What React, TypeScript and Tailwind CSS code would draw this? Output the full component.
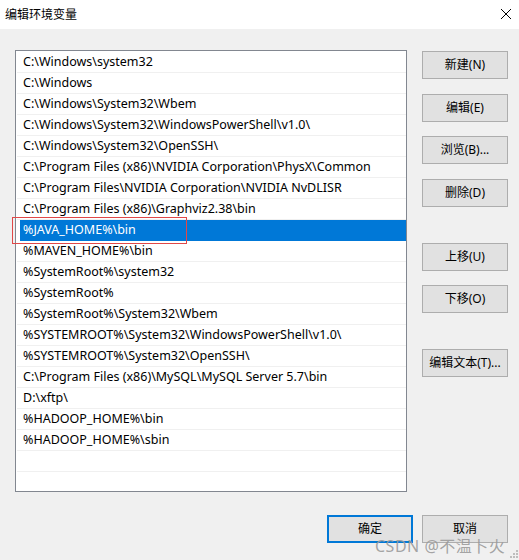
import React from 'react';

const paths = [
  'C:\\Windows\\system32',
  'C:\\Windows',
  'C:\\Windows\\System32\\Wbem',
  'C:\\Windows\\System32\\WindowsPowerShell\\v1.0\\',
  'C:\\Windows\\System32\\OpenSSH\\',
  'C:\\Program Files (x86)\\NVIDIA Corporation\\PhysX\\Common',
  'C:\\Program Files\\NVIDIA Corporation\\NVIDIA NvDLISR',
  'C:\\Program Files (x86)\\Graphviz2.38\\bin',
  '%JAVA_HOME%\\bin',
  '%MAVEN_HOME%\\bin',
  '%SystemRoot%\\system32',
  '%SystemRoot%',
  '%SystemRoot%\\System32\\Wbem',
  '%SYSTEMROOT%\\System32\\WindowsPowerShell\\v1.0\\',
  '%SYSTEMROOT%\\System32\\OpenSSH\\',
  'C:\\Program Files (x86)\\MySQL\\MySQL Server 5.7\\bin',
  'D:\\xftp\\',
  '%HADOOP_HOME%\\bin',
  '%HADOOP_HOME%\\sbin',
  '',
  '',
];

const SELECTED = 8;

const Btn: React.FC<{ label: string; className?: string; primary?: boolean }> = ({ label, className = '', primary }) => (
  <div
    className={`w-[86px] h-[28px] flex items-center justify-center bg-[#e1e1e1] text-[12px] text-black ${
      primary ? 'border-2 border-[#0078d7]' : 'border border-[#adadad]'
    } ${className}`}
  >
    {label}
  </div>
);

export default function App() {
  return (
    <div
      className="w-[519px] h-[560px] bg-[#f0f0f0] flex flex-col relative overflow-hidden"
      style={{ fontFamily: '"Noto Sans", "Noto Sans CJK SC", sans-serif' }}
    >
      {/* title bar */}
      <div className="h-[29px] bg-white flex items-center justify-between pl-[5px] pr-[7px]">
        <span className="text-[12px] text-black">编辑环境变量</span>
        <svg width="12" height="12" viewBox="0 0 12 12" className="mb-[2px]">
          <path d="M1 1 L11 11 M11 1 L1 11" stroke="#000" strokeWidth="1" />
        </svg>
      </div>

      <div className="flex pl-[15px] pt-[21px]">
        {/* path list */}
        <div className="relative w-[392px] h-[442px] bg-white border border-[#828790]">
          <div className="h-full pt-px overflow-hidden">
            {paths.map((p, i) => (
              <div key={i} className="h-[21px] pl-px flex">
                {i === SELECTED ? (
                  <div className="flex-1 flex items-center ml-[3px] pl-[3px] bg-[#0078d7] text-white text-[12.5px]">
                    {p}
                  </div>
                ) : (
                  <div className="flex-1 flex items-center pl-[6px] border-b border-[#f0f0f0] text-black text-[12.5px]">
                    {p}
                  </div>
                )}
              </div>
            ))}
          </div>
          <div className="absolute left-[-4px] top-[166px] w-[175px] h-[27px] border border-[#e04848]" />
        </div>

        {/* side buttons */}
        <div className="flex flex-col ml-[15px] pt-px">
          <Btn label="新建(N)" />
          <Btn label="编辑(E)" className="mt-[15px]" />
          <Btn label="浏览(B)..." className="mt-[14px]" />
          <Btn label="删除(D)" className="mt-[15px]" />
          <Btn label="上移(U)" className="mt-[36px]" />
          <Btn label="下移(O)" className="mt-[14px]" />
          <Btn label="编辑文本(T)..." className="mt-[36px]" />
        </div>
      </div>

      {/* bottom buttons */}
      <div className="flex justify-end gap-[9px] pr-[11px] mt-[23px]">
        <Btn label="确定" primary />
        <Btn label="取消" />
      </div>

      {/* watermark */}
      <div className="absolute left-[375px] top-[534px] text-[16px] text-[#9a9a9a]/90 tracking-[0.5px]">
        CSDN @不温卜火
      </div>

      {/* resize grip */}
      <svg width="8" height="8" viewBox="0 0 8 8" className="absolute right-[1px] bottom-[2px]">
        <rect x="6" y="0" width="2" height="2" fill="#bdbdbd" />
        <rect x="3" y="3" width="2" height="2" fill="#bdbdbd" />
        <rect x="6" y="3" width="2" height="2" fill="#bdbdbd" />
        <rect x="0" y="6" width="2" height="2" fill="#bdbdbd" />
        <rect x="3" y="6" width="2" height="2" fill="#bdbdbd" />
        <rect x="6" y="6" width="2" height="2" fill="#bdbdbd" />
      </svg>
    </div>
  );
}
